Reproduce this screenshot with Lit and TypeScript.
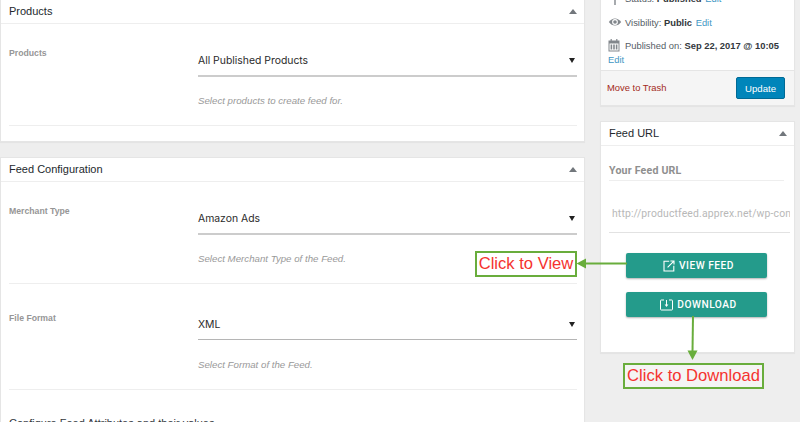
import { LitElement, html, css, svg } from "lit";
import { customElement } from "lit/decorators.js";

@customElement("app-root")
export class AppRoot extends LitElement {
  static styles = css`
    :host { display: block; width: 800px; height: 422px; overflow: hidden; position: relative; background: #eeeeee; font-family: "Liberation Sans", Arial, sans-serif; color: #32373c; }
    * { box-sizing: border-box; }
    .page { display: flex; align-items: flex-start; gap: 15px; }
    .main { width: 585px; flex: none; display: flex; flex-direction: column; gap: 15px; margin-top: -20px; }
    .side { width: 195px; flex: none; display: flex; flex-direction: column; gap: 15px; margin-top: -20px; }
    .panel { background: #fff; border: 1px solid #e5e5e5; box-shadow: 0 1px 1px rgba(0,0,0,.04); }
    .head { height: 24px; border-bottom: 1px solid #eeeeee; display: flex; align-items: center; justify-content: space-between; padding: 0 7px 1px 8px; font-size: 11px; color: #23282d; }
    .main .panel:first-child .head { height: 43px; padding-top: 19px; }
    .tri { width: 0; height: 0; border-left: 4px solid transparent; border-right: 4px solid transparent; border-bottom: 5px solid #72777c; }
    .rows { padding: 0 7px 0 8px; }
    .rows.p1 { padding-bottom: 15px; }
    .row { display: grid; grid-template-columns: 189px 1fr; height: 102px; border-bottom: 1px solid #eeeeee; }
    .row.tall { height: 106px; padding-top: 4px; }
    .label { font-size: 8.7px; font-weight: 700; color: #969696; padding-top: 23px; line-height: 12px; }
    .row.tall .label { padding-top: 24px; }
    .select { font-family: Inter, sans-serif; height: 32px; margin-top: 21px; border-bottom: 2px solid #cccccc; display: flex; align-items: center; justify-content: space-between; font-size: 10.4px; color: #2b2b2b; padding: 0 1px 0 0; }
    .row.tall .select { margin-top: 21px; height: 31px; border-bottom: 1px solid #b5b5b5; }
    .caret { width: 0; height: 0; border-left: 3px solid transparent; border-right: 3px solid transparent; border-top: 5px solid #222; margin-right: 1px; }
    .help { font-size: 9.7px; font-style: italic; color: #999999; margin-top: 18px; line-height: 12px; }
    .row.tall .help { margin-top: 19px; }
    .next { font-size: 11px; color: #32373c; padding: 26px 0 0 0; line-height: 14px; height: 43px; }
    .pub { padding: 0; }
    .pub-body { padding: 10px 7px 0 7px; font-size: 9.4px; color: #555d66; height: 89px; }
    .line { display: flex; align-items: center; gap: 3px; height: 14px; white-space: nowrap; }
    .line svg { flex: none; }
    .line.one { margin-top: 10px; margin-bottom: 9px; }
    .line b { color: #32373c; font-weight: 700; }
    .edit { color: #3f97c4; margin-left: 1px; }
    .edit.solo { margin-left: 0; display: block; line-height: 14px; padding-top: 1px; }
    .foot { height: 35px; background: #f5f5f5; border-top: 1px solid #e5e5e5; display: flex; align-items: center; justify-content: space-between; padding: 0 9px 0 6px; font-size: 9.4px; }
    .trash { color: #a32a22; padding-bottom: 2px; }
    .update { width: 49px; height: 22px; background: #0085ba; border: 1px solid #006a95; border-radius: 2px; color: #fff; font-size: 9.6px; display: flex; align-items: center; justify-content: center; }
    .url { height: 206px; padding: 0 4px 0 8px; }
    .url-title { font-family: Roboto, sans-serif; font-size: 10.6px; font-weight: 700; color: #8f8f8f; height: 35px; padding: 18px 0 0; border-bottom: 1px solid #eeeeee; line-height: 13px; width: 175px; letter-spacing: .2px; }
    .url-input { height: 52px; width: 181px; border-bottom: 1px solid #e2e2e2; font-family: Roboto, sans-serif; font-size: 10.4px; color: #b8b8b8; padding: 26px 3px 0 3px; line-height: 13px; white-space: nowrap; overflow: hidden; letter-spacing: .15px; }
    .btns { display: flex; flex-direction: column; gap: 14px; padding: 20px 0 0 17px; }
    .btn { width: 141px; height: 25px; padding-left: 4px; background: #249b8b; border-radius: 2px; box-shadow: 0 1px 2px rgba(0,0,0,.3); color: #fff; font-family: Roboto, sans-serif; font-size: 10.2px; font-weight: 500; letter-spacing: .5px; display: flex; align-items: center; justify-content: center; gap: 4px; }
    .overlay { position: absolute; left: 0; top: 0; pointer-events: none; }
    .callout { position: absolute; background: #fff; border: 2px solid #69ad3c; color: #f5332f; font-family: "Liberation Sans", Arial, sans-serif; font-size: 16.6px; line-height: 22px; white-space: nowrap; display: flex; align-items: center; justify-content: center; }
    .c-view { left: 475px; top: 251px; width: 102px; height: 26px; }
    .c-down { left: 623px; top: 363px; width: 141px; height: 26px; background: #f4f4f4; }
  `;

  private row(label: string, value: string, help: string, tall = false) {
    return html`<div class="row ${tall ? "tall" : ""}">
      <div class="label">${label}</div>
      <div>
        <div class="select"><span>${value}</span><span class="caret"></span></div>
        <div class="help">${help}</div>
      </div>
    </div>`;
  }

  render() {
    return html`
      <div class="page">
        <div class="main">
          <section class="panel">
            <div class="head"><span>Products</span><span class="tri"></span></div>
            <div class="rows p1">${this.row("Products", "All Published Products", "Select products to create feed for.")}</div>
          </section>
          <section class="panel">
            <div class="head"><span>Feed Configuration</span><span class="tri"></span></div>
            <div class="rows">
              ${this.row("Merchant Type", "Amazon Ads", "Select Merchant Type of the Feed.")}
              ${this.row("File Format", "XML", "Select Format of the Feed.", true)}
              <div class="next">Configure Feed Attributes and their values.</div>
            </div>
          </section>
        </div>
        <div class="side">
          <section class="panel pub">
            <div class="pub-body">
              <div class="line">
                <svg width="14" height="14" viewBox="0 0 14 14"><path d="M7 2v12" stroke="#82878c" stroke-width="1.4"/></svg>
                <span>Status: <b>Published</b> <span class="edit">Edit</span></span>
              </div>
              <div class="line one">
                <svg width="14" height="14" viewBox="0 0 14 14"><path d="M.8 7C2.6 4.6 4.6 3.4 7 3.4s4.4 1.2 6.2 3.600c-1.8 2.400-3.800 3.600-6.200 3.600S2.600 9.400.8 7z" fill="#82878c"/><circle cx="7" cy="7" r="2.900" fill="#fff"/><circle cx="7" cy="7" r="1.800" fill="#82878c"/></svg>
                <span>Visibility: <b>Public</b> <span class="edit">Edit</span></span>
              </div>
              <div class="line">
                <svg width="12" height="13" viewBox="0 0 12 13" style="margin-right:2px"><path d="M.5 1.500h11v11H.5z" fill="#82878c"/><path d="M1.500 4.500h9v7h-9z" fill="#fff"/><path d="M2.600 5.500h1.600v5H2.600zM5.200 5.500h1.600v5H5.200zM7.800 5.500h1.600v5H7.800z" fill="#82878c"/><path d="M2.600 0h1.200v2H2.600zM8.200 0h1.200v2H8.200z" fill="#82878c"/></svg>
                <span>Published on: <b>Sep 22, 2017 @ 10:05</b></span>
              </div>
              <span class="edit solo">Edit</span>
            </div>
            <div class="foot"><span class="trash">Move to Trash</span><span class="update">Update</span></div>
          </section>
          <section class="panel">
            <div class="head"><span>Feed URL</span><span class="tri"></span></div>
            <div class="url">
              <div class="url-title">Your Feed URL</div>
              <div class="url-input">http://productfeed.apprex.net/wp-content/uploads</div>
              <div class="btns">
                <div class="btn">
                  <svg width="12" height="12" viewBox="0 0 12 12" fill="none" stroke="#fff" stroke-width="1.100"><path d="M6.200 1.200H1v9.800h9.800V5.800"/><path d="M4.600 7.400 10.600 1.400M7.400 1h3.600v3.600"/></svg>
                  <span>VIEW FEED</span>
                </div>
                <div class="btn">
                  <svg width="13" height="12" viewBox="0 0 13 12" fill="none" stroke="#fff" stroke-width="1"><path d="M4 1H1.200a.7.7 0 0 0-.7.7v8.600c0 .4.300.7.700.7h10.600c.4 0 .7-.3.700-.7V1.700a.7.7 0 0 0-.7-.7H9"/><path d="M6.500 1v5.500"/><path d="M4.600 5.400h3.800L6.500 8z" fill="#fff" stroke="none"/></svg>
                  <span>DOWNLOAD</span>
                </div>
              </div>
            </div>
          </section>
        </div>
      </div>
      <svg class="overlay" width="800" height="422" viewBox="0 0 800 422">
        ${svg`<path d="M627 263.500H584" stroke="#69ad3c" stroke-width="2"/>
        <path d="M576.500 263.500 586 258.500v10z" fill="#69ad3c"/>
        <path d="M693 316 692.500 352" stroke="#69ad3c" stroke-width="2"/>
        <path d="M687.500 350.500h10L692.500 360z" fill="#69ad3c"/>`}
      </svg>
      <div class="callout c-view">Click to View</div>
      <div class="callout c-down">Click to Download</div>
    `;
  }
}
